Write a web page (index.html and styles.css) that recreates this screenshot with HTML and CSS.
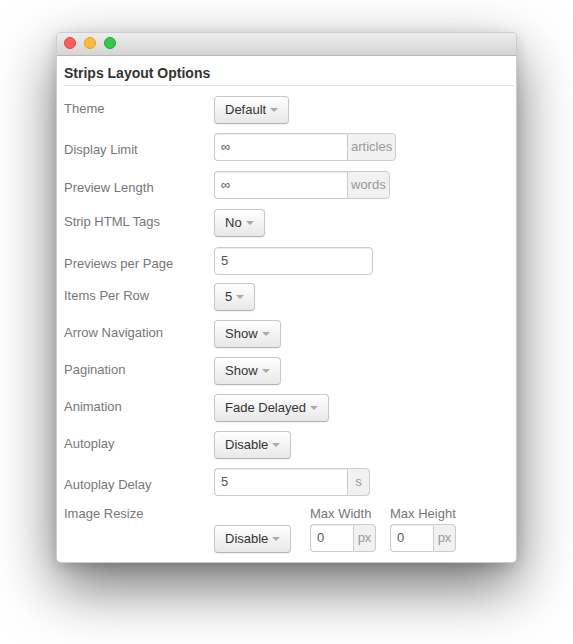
FILE: index.html
```html
<!DOCTYPE html>
<html lang="en">
<head>
<meta charset="utf-8">
<title>Strips Layout Options</title>
<link rel="stylesheet" href="styles.css">
</head>
<body>
<div class="window">
  <div class="titlebar">
    <span class="light red"></span>
    <span class="light yellow"></span>
    <span class="light green"></span>
  </div>
  <div class="content">
    <h3 class="legend">Strips Layout Options</h3>

    <div class="row">
      <div class="lbl">Theme</div>
      <button type="button" class="btn">Default<span class="caret"></span></button>
    </div>

    <div class="row row-input gap10">
      <div class="lbl">Display Limit</div>
      <div class="append"><input class="field w133" type="text" value="∞"><span class="addon">articles</span></div>
    </div>

    <div class="row row-input gap10">
      <div class="lbl">Preview Length</div>
      <div class="append"><input class="field w133" type="text" value="∞"><span class="addon">words</span></div>
    </div>

    <div class="row gap10">
      <div class="lbl">Strip HTML Tags</div>
      <button type="button" class="btn">No<span class="caret"></span></button>
    </div>

    <div class="row row-input gap8">
      <div class="lbl">Previews per Page</div>
      <input class="field w159" type="text" value="5">
    </div>

    <div class="row">
      <div class="lbl">Items Per Row</div>
      <button type="button" class="btn">5<span class="caret"></span></button>
    </div>

    <div class="row">
      <div class="lbl">Arrow Navigation</div>
      <button type="button" class="btn">Show<span class="caret"></span></button>
    </div>

    <div class="row">
      <div class="lbl">Pagination</div>
      <button type="button" class="btn">Show<span class="caret"></span></button>
    </div>

    <div class="row">
      <div class="lbl">Animation</div>
      <button type="button" class="btn">Fade Delayed<span class="caret"></span></button>
    </div>

    <div class="row">
      <div class="lbl">Autoplay</div>
      <button type="button" class="btn">Disable<span class="caret"></span></button>
    </div>

    <div class="row row-input">
      <div class="lbl">Autoplay Delay</div>
      <div class="append"><input class="field w133" type="text" value="5"><span class="addon">s</span></div>
    </div>

    <div class="row row-resize">
      <div class="lbl lbl-top">Image Resize</div>
      <div class="resize-btn">
        <button type="button" class="btn">Disable<span class="caret"></span></button>
      </div>
      <div class="sub">
        <div class="sub-label">Max Width</div>
        <div class="append"><input class="field w43" type="text" value="0"><span class="addon">px</span></div>
      </div>
      <div class="sub">
        <div class="sub-label">Max Height</div>
        <div class="append"><input class="field w43" type="text" value="0"><span class="addon">px</span></div>
      </div>
    </div>
  </div>
</div>
</body>
</html>
```

FILE: styles.css
```css
html {
  background: #ffffff;
}

body {
  margin: 0;
  padding: 32px 0 81px 56px;
  background: #ffffff;
  font-family: "Liberation Sans", Arial, sans-serif;
  font-size: 13px;
  line-height: 18px;
  color: #333333;
}

.window {
  box-sizing: border-box;
  width: 461px;
  height: 531px;
  background: #ffffff;
  border: 1px solid rgba(0, 0, 0, 0.2);
  border-radius: 5px;
  box-shadow: 0 24px 58px rgba(0, 0, 0, 0.55), 0 4px 14px rgba(0, 0, 0, 0.15);
  overflow: hidden;
}

.titlebar {
  height: 18px;
  padding: 4px 0 0 7px;
  display: flex;
  align-items: flex-start;
  gap: 8px;
  background: linear-gradient(#ededed, #d5d5d5);
  border-bottom: 1px solid #b8b8b8;
}

.light {
  box-sizing: border-box;
  width: 12px;
  height: 12px;
  border-radius: 50%;
}
.red { background: #fc605c; border: 1px solid #e0443e; }
.yellow { background: #fdbc40; border: 1px solid #dea123; }
.green { background: #34c84a; border: 1px solid #1aab29; }

.content {
  padding: 0 2px 0 7px;
}

.legend {
  margin: 7px 0 10px;
  padding-bottom: 2px;
  font-size: 14px;
  line-height: 20px;
  font-weight: bold;
  color: #333333;
  border-bottom: 1px solid #e3e3e3;
}

.row {
  display: flex;
  align-items: flex-start;
  margin-bottom: 9px;
}
.gap10 { margin-bottom: 10px; }
.gap8 { margin-bottom: 8px; }

.lbl {
  width: 150px;
  flex: none;
  padding-top: 4px;
  color: #777777;
}
.row-input .lbl { padding-top: 8px; }

.btn {
  box-sizing: border-box;
  height: 28px;
  margin: 0;
  padding: 0 10px;
  display: inline-flex;
  align-items: center;
  gap: 4px;
  font-family: "Liberation Sans", Arial, sans-serif;
  font-size: 13px;
  line-height: 18px;
  color: #333333;
  background: linear-gradient(#ffffff, #e8e8e8);
  border: 1px solid #c8c8c8;
  border-bottom-color: #b3b3b3;
  border-radius: 4px;
  box-shadow: 0 1px 2px rgba(0, 0, 0, 0.06);
}

.caret {
  width: 0;
  height: 0;
  border-left: 4px solid transparent;
  border-right: 4px solid transparent;
  border-top: 4px solid #aaaaaa;
}

.field {
  box-sizing: border-box;
  height: 28px;
  margin: 0;
  padding: 3px 6px 5px;
  font-family: "Liberation Sans", Arial, sans-serif;
  font-size: 13px;
  line-height: 18px;
  color: #555555;
  background: #ffffff;
  border: 1px solid #cccccc;
  border-radius: 4px;
  box-shadow: inset 0 1px 1px rgba(0, 0, 0, 0.075);
  outline: none;
}
.w133 { width: 133px; }
.w159 { width: 159px; }
.w43 { width: 43px; }

.append {
  display: flex;
}
.append .field {
  border-right: 0;
  border-radius: 4px 0 0 4px;
}

.addon {
  box-sizing: border-box;
  height: 28px;
  min-width: 23px;
  padding: 4px 3px;
  text-align: center;
  color: #999999;
  background: #f1f1f1;
  border: 1px solid #cccccc;
  border-radius: 0 4px 4px 0;
}

.row-resize {
  align-items: flex-end;
  margin-bottom: 0;
}
.lbl-top {
  align-self: flex-start;
  padding-top: 0;
}
.resize-btn {
  width: 96px;
  flex: none;
  margin-bottom: -1px;
}
.sub {
  width: 80px;
  flex: none;
  display: flex;
  flex-direction: column;
}
.sub-label {
  color: #777777;
  margin-bottom: 1px;
}
```
